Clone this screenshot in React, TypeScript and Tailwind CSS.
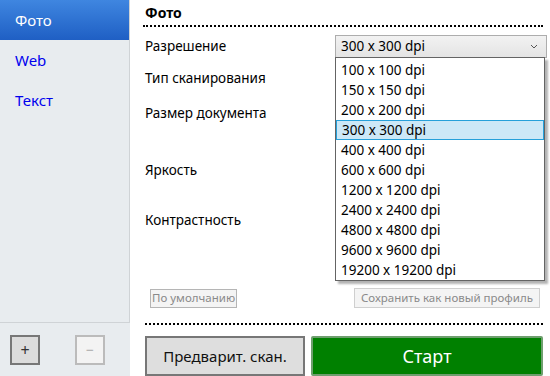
import React from "react";

const resolutions = [
  "100 x 100 dpi",
  "150 x 150 dpi",
  "200 x 200 dpi",
  "300 x 300 dpi",
  "400 x 400 dpi",
  "600 x 600 dpi",
  "1200 x 1200 dpi",
  "2400 x 2400 dpi",
  "4800 x 4800 dpi",
  "9600 x 9600 dpi",
  "19200 x 19200 dpi",
];

const App: React.FC = () => {
  const selected = "300 x 300 dpi";

  return (
    <div
      className="w-[550px] h-[376px] flex bg-white text-black overflow-hidden"
      style={{ fontFamily: '"Noto Sans", "Open Sans", sans-serif' }}
    >
      {/* Sidebar */}
      <div className="w-[130px] flex flex-col bg-[#e8ecef]">
        <div className="flex-1 border-r border-b border-[#cfd3d6] flex flex-col">
          <div className="h-[40px] flex items-center pl-[15px] text-[15px] text-white bg-gradient-to-b from-[#3f86e0] to-[#1f5fc4]">
            Фото
          </div>
          <div className="h-[40px] flex items-center pl-[15px] text-[15px] text-[#0000ee]">
            Web
          </div>
          <div className="h-[40px] flex items-center pl-[15px] text-[15px] text-[#0000ee]">
            Текст
          </div>
        </div>
        <div className="h-[53px] flex items-center pl-[10px] gap-[35px]">
          <button className="w-[30px] h-[30px] border-2 border-[#777] bg-[#dcdcdc] flex items-center justify-center text-[16px] leading-none text-[#333]">
            +
          </button>
          <button className="w-[30px] h-[30px] border-2 border-[#bbb] bg-[#f3f3f3] flex items-center justify-center text-[14px] leading-none text-[#aaa]">
            −
          </button>
        </div>
      </div>

      {/* Main */}
      <div className="flex-1 flex flex-col pl-[13px] pr-[7px] relative">
        <div className="h-[27px] flex items-end">
          <div className="w-full pb-[1px] border-b-2 border-dotted border-black">
            <span className="font-bold text-[14px] leading-[16px] ml-[2px]">Фото</span>
          </div>
        </div>

        <div className="mt-[8px] h-[22px] flex items-center">
          <span className="ml-[2px] text-[13.5px] flex-1">Разрешение</span>
          <div className="w-[212px] h-[23px] mr-[-4px] border border-[#adadad] bg-gradient-to-b from-[#f2f2f2] to-[#e4e4e4] flex items-center pl-[5px] pr-[8px]">
            <span className="flex-1 text-[13.5px]">{selected}</span>
            <svg width="8" height="5" viewBox="0 0 8 5" className="text-[#555]">
              <path d="M1 1 L4 4 L7 1" fill="none" stroke="currentColor" strokeWidth="1" />
            </svg>
          </div>
        </div>

        <div className="ml-[2px] mt-[11px] text-[13.5px] leading-[20px]">Тип сканирования</div>
        <div className="ml-[2px] mt-[15px] text-[13.5px] leading-[20px]">Размер документа</div>
        <div className="ml-[2px] mt-[37px] text-[13.5px] leading-[20px]">Яркость</div>
        <div className="ml-[2px] mt-[30px] text-[13.5px] leading-[20px]">Контрастность</div>

        <div className="mt-[58px] h-[20px] flex items-center justify-between">
          <button className="ml-[7px] h-[19px] px-[1px] border border-[#b5b5b5] bg-[#f4f4f4] text-[11.5px] text-[#8a8a8a] leading-none">
            По умолчанию
          </button>
          <button className="mr-[3px] h-[20px] px-[6px] border border-[#cfcfcf] bg-[#f4f4f4] text-[11.5px] text-[#8a8a8a] leading-none">
            Сохранить как новый профиль
          </button>
        </div>

        <div className="mt-[15px] ml-[2px] border-t-2 border-dotted border-black" />

        <div className="mt-[11px] flex gap-[6px] ml-[2px]">
          <button className="w-[160px] h-[40px] border-2 border-[#777] bg-[#dedede] text-[15px] text-[#111]">
            Предварит. скан.
          </button>
          <button className="flex-1 h-[40px] border-2 border-[#6e9e6e] rounded-[2px] bg-[#008000] text-[18px] text-white">
            Старт
          </button>
        </div>

        {/* Open dropdown list */}
        <div className="absolute left-[205px] top-[57px] w-[210px] bg-white border border-[#646464] shadow-[3px_3px_2px_rgba(0,0,0,0.3)] pt-[2px] pb-[0px]">
          {resolutions.map((r) => (
            <div
              key={r}
              className={`h-[20px] flex items-center pl-[5px] text-[13.5px] ${
                r === selected ? "bg-[#cce8f7] border border-[#26a0da] pl-[4px]" : ""
              }`}
            >
              {r}
            </div>
          ))}
        </div>
      </div>
    </div>
  );
};

export default App;
